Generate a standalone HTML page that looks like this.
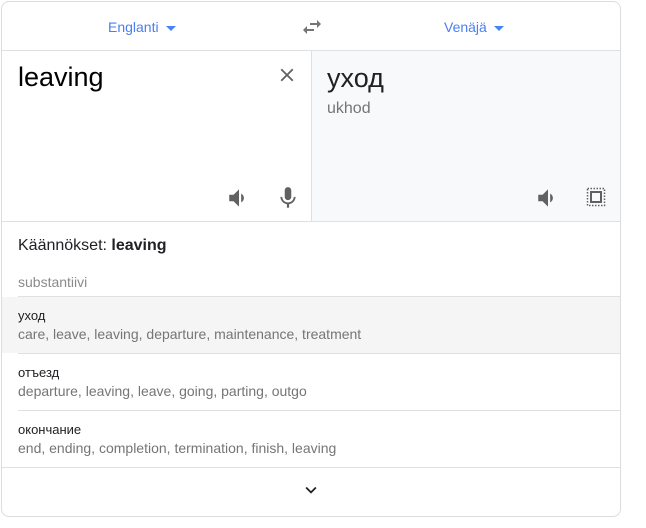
<!DOCTYPE html>
<html><head><meta charset="utf-8"><style>
*{margin:0;padding:0;box-sizing:border-box}
body{width:646px;height:528px;background:#fff;font-family:"Liberation Sans",Arial,sans-serif;position:relative;overflow:hidden}
.card{position:absolute;left:1px;top:1px;width:620px;height:516px;border:1px solid #dadce0;border-radius:8px;overflow:hidden;background:#fff}
.a{position:absolute;white-space:nowrap}
.lang{color:#4a7ff0;font-size:14px;top:17px}
.caret{display:inline-block;width:0;height:0;border-left:5px solid transparent;border-right:5px solid transparent;border-top:5px solid #4285f4;vertical-align:middle;margin-left:7px}
.hl{position:absolute;height:1px;background:#e0e0e0}
.g{color:#757575}
.row1{font-size:13px;color:#202124}
.row2{font-size:14px;color:#757575}
</style></head><body>
<div class="card">
 <div class="a lang" style="left:106px">Englanti<span class="caret"></span></div>
 <svg class="a" style="left:298px;top:13px" width="24" height="24" viewBox="0 0 24 24"><path fill="#757575" d="M6.99 11L3 15l3.99 4v-3H14v-2H6.99v-3zM21 9l-3.99-4v3H10v2h7.01v3L21 9z"/></svg>
 <div class="a lang" style="left:442px">Venäjä<span class="caret"></span></div>
 <div class="hl" style="left:0;top:48px;width:620px"></div>
 <div class="a" style="left:309px;top:49px;width:311px;height:170px;background:#f8f9fa;border-left:1px solid #e0e0e0"></div>
 <div class="a" style="left:16px;top:60px;font-size:27px;color:#000">leaving</div>
 <svg class="a" style="left:274px;top:62px" width="22" height="22" viewBox="0 0 24 24"><path fill="#616161" d="M19 6.41L17.59 5 12 10.59 6.41 5 5 6.41 10.59 12 5 17.59 6.41 19 12 13.41 17.59 19 19 17.59 13.41 12z"/></svg>
 <svg class="a" style="left:224px;top:183px" width="26" height="26" viewBox="0 0 24 24"><path fill="#616161" d="M3 9v6h4l5 5V4L7 9H3zm13.5 3c0-1.77-1-3.29-2.5-4.030v8.05c1.5-.73 2.5-2.25 2.5-4.02z"/></svg>
 <svg class="a" style="left:273px;top:183px" width="26" height="26" viewBox="0 0 24 24"><path fill="#616161" d="M12 14c1.66 0 3-1.34 3-3V5c0-1.66-1.34-3-3-3S9 3.34 9 5v6c0 1.66 1.34 3 3 3zm5.3-3c0 3-2.54 5.1-5.3 5.1S6.7 14 6.7 11H5c0 3.410 2.72 6.23 6 6.72V21h2v-3.28c3.28-.48 6-3.3 6-6.72h-1.7z"/></svg>
 <div class="a" style="left:325px;top:61px;font-size:27px;color:#202124">уход</div>
 <div class="a g" style="left:325px;top:98px;font-size:16px">ukhod</div>
 <svg class="a" style="left:533px;top:183px" width="26" height="26" viewBox="0 0 24 24"><path fill="#616161" d="M3 9v6h4l5 5V4L7 9H3zm13.5 3c0-1.77-1-3.29-2.5-4.03v8.05c1.5-.73 2.5-2.25 2.5-4.02z"/></svg>
 <svg class="a" style="left:582px;top:183px" width="24" height="24" viewBox="0 0 24 24"><path fill="none" stroke="#616161" stroke-width="1.5" stroke-dasharray="1.5 1.5" d="M3.5 3.5h17v17h-17z"/><rect x="7" y="7" width="10" height="10" fill="none" stroke="#616161" stroke-width="2"/></svg>
 <div class="hl" style="left:0;top:219px;width:620px"></div>
 <div class="a" style="left:16px;top:235px;font-size:16px;color:#202124">Käännökset: <b>leaving</b></div>
 <div class="a g" style="left:16px;top:272px;font-size:14px;color:#8a8a8a">substantiivi</div>
 <div class="hl" style="left:16px;top:294px;width:604px"></div>
 <div class="a" style="left:0;top:295px;width:620px;height:56px;background:#f5f5f5"></div>
 <div class="a row1" style="left:16px;top:306px">уход</div>
 <div class="a row2" style="left:16px;top:324px">care, leave, leaving, departure, maintenance, treatment</div>
 <div class="hl" style="left:16px;top:351px;width:604px"></div>
 <div class="a row1" style="left:16px;top:363px">отъезд</div>
 <div class="a row2" style="left:16px;top:381px">departure, leaving, leave, going, parting, outgo</div>
 <div class="hl" style="left:16px;top:408px;width:604px"></div>
 <div class="a row1" style="left:16px;top:420px">окончание</div>
 <div class="a row2" style="left:16px;top:438px">end, ending, completion, termination, finish, leaving</div>
 <div class="hl" style="left:0;top:465px;width:620px"></div>
 <svg class="a" style="left:298px;top:477px" width="22" height="22" viewBox="0 0 24 24"><path fill="#202124" d="M7.41 8.59L12 13.17l4.59-4.58L18 10l-6 6-6-6 1.41-1.41z"/></svg>
</div>
</body></html>
